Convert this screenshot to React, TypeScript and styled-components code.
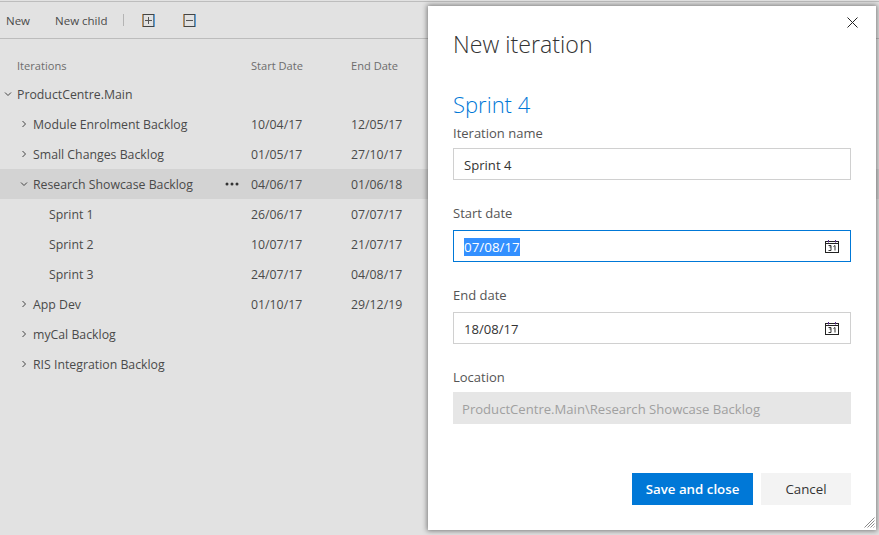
import * as React from 'react'
import styled, { createGlobalStyle } from 'styled-components'

const FONT = '"Open Sans", "Noto Sans", sans-serif'

interface Iteration {
  name: string
  level: number
  start?: string
  end?: string
  toggle?: 'open' | 'closed'
  active?: boolean
}

const ITERATIONS: Iteration[] = [
  { name: 'ProductCentre.Main', level: 0, toggle: 'open' },
  { name: 'Module Enrolment Backlog', level: 1, toggle: 'closed', start: '10/04/17', end: '12/05/17' },
  { name: 'Small Changes Backlog', level: 1, toggle: 'closed', start: '01/05/17', end: '27/10/17' },
  { name: 'Research Showcase Backlog', level: 1, toggle: 'open', start: '04/06/17', end: '01/06/18', active: true },
  { name: 'Sprint 1', level: 2, start: '26/06/17', end: '07/07/17' },
  { name: 'Sprint 2', level: 2, start: '10/07/17', end: '21/07/17' },
  { name: 'Sprint 3', level: 2, start: '24/07/17', end: '04/08/17' },
  { name: 'App Dev', level: 1, toggle: 'closed', start: '01/10/17', end: '29/12/19' },
  { name: 'myCal Backlog', level: 1, toggle: 'closed' },
  { name: 'RIS Integration Backlog', level: 1, toggle: 'closed' },
]

const Chevron = ({ type }: { type: 'open' | 'closed' }) => (
  <ToggleIcon width="8" height="8" viewBox="0 0 8 8">
    <path
      d={type === 'open' ? 'M1 2.5 L4 5.5 L7 2.5' : 'M2.5 1 L5.5 4 L2.5 7'}
      fill="none"
      stroke="#444"
      strokeWidth="1"
    />
  </ToggleIcon>
)

const BoxIcon = ({ plus }: { plus?: boolean }) => (
  <svg width="13" height="13" viewBox="0 0 13 13">
    <path d="M0 0.5 H13 M0 12.5 H13" stroke="#444" />
    <path d="M0.5 0 V13" stroke="#c08a4c" />
    <path d="M1.5 1 V12" stroke="#7c8894" />
    <path d="M11.5 1 V12" stroke="#6f7a84" />
    <path d="M12.5 0 V13" stroke="#4f9bdc" />
    <path d={plus ? 'M3 6.5 H10 M6.5 3 V10' : 'M3 6.5 H10'} fill="none" stroke="#555" />
  </svg>
)

const CalendarIcon = () => (
  <CalendarSvg width="14" height="14" viewBox="0 0 14 14">
    <rect x="0.5" y="2.5" width="13" height="11" fill="none" stroke="#222" />
    <path d="M0.5 4.5 H13.5" stroke="#222" />
    <path d="M3.5 1 V3.5 M10.5 1 V3.5" stroke="#5c2d91" />
    <path
      d="M3.5 6.5 H6 V8 H4.5 M6 8 V11.5 H3.5 M8.5 7.5 L10 6.5 V11.5"
      fill="none"
      stroke="#333"
    />
  </CalendarSvg>
)

const App = () => (
  <Page>
    <GlobalStyle />
    <Toolbar>
      <ToolButton>New</ToolButton>
      <ToolButton>New child</ToolButton>
      <Separator />
      <IconButton>
        <BoxIcon plus />
      </IconButton>
      <IconButton>
        <BoxIcon />
      </IconButton>
    </Toolbar>
    <HeaderRow>
      <NameCell level={0}>Iterations</NameCell>
      <DateCell>Start Date</DateCell>
      <DateCell>End Date</DateCell>
    </HeaderRow>
    {ITERATIONS.map(item => (
      <Row key={item.name} active={item.active}>
        <NameCell level={item.level}>
          {item.toggle && <Chevron type={item.toggle} />}
          <Name>{item.name}</Name>
          {item.active && (
            <MoreIcon width="14" height="4" viewBox="0 0 14 4">
              <circle cx="2" cy="2" r="1.5" fill="#333" />
              <circle cx="7" cy="2" r="1.5" fill="#333" />
              <circle cx="12" cy="2" r="1.5" fill="#333" />
            </MoreIcon>
          )}
        </NameCell>
        <DateCell>{item.start}</DateCell>
        <DateCell>{item.end}</DateCell>
      </Row>
    ))}
    <Dialog>
      <CloseIcon width="11" height="11" viewBox="0 0 11 11">
        <path d="M0.5 0.5 L10.5 10.5 M10.5 0.5 L0.5 10.5" stroke="#222" />
      </CloseIcon>
      <Title>New iteration</Title>
      <Subtitle>Sprint 4</Subtitle>
      <Label>Iteration name</Label>
      <Field>Sprint 4</Field>
      <Label wide>Start date</Label>
      <Field focused>
        <Selected>07/08/17</Selected>
        <CalendarIcon />
      </Field>
      <Label wide>End date</Label>
      <Field>
        18/08/17
        <CalendarIcon />
      </Field>
      <Label>Location</Label>
      <Field disabled>ProductCentre.Main\Research Showcase Backlog</Field>
      <Footer>
        <Button primary>Save and close</Button>
        <Button>Cancel</Button>
      </Footer>
      <Grip width="11" height="11" viewBox="0 0 11 11">
        <path d="M0.5 10.5 L10.5 0.5 M3.5 10.5 L10.5 3.5 M6.5 10.5 L10.5 6.5 M9.5 10.5 L10.5 9.5" stroke="#8a8a8a" />
      </Grip>
    </Dialog>
  </Page>
)

const GlobalStyle = createGlobalStyle`
  html, body {
    margin: 0;
    height: 100%;
    overflow: hidden;
    background: #e2e2e2;
  }
`

const Page = styled.div`
  position: relative;
  height: 535px;
  box-sizing: border-box;
  padding-top: 1px;
  font-family: ${FONT};
  font-size: 12.3px;
  color: #4a4a4a;
`

const Toolbar = styled.div`
  display: flex;
  align-items: center;
  height: 36px;
  padding-left: 6px;
  border-top: 1px solid #bdbdbd;
  border-bottom: 1px solid #bcbcbc;
`

const ToolButton = styled.span`
  margin-right: 25px;
  font-size: 11.5px;
`

const Separator = styled.span`
  width: 1px;
  height: 12px;
  margin-left: -9px;
  margin-right: 18px;
  background: #b4b4b4;
`

const IconButton = styled.span`
  display: flex;
  margin-right: 28px;
`

const HeaderRow = styled.div`
  display: flex;
  align-items: center;
  height: 28px;
  margin-top: 12px;
  color: #6d6d6d;
  font-size: 11.1px;
`

const Row = styled.div<{ active?: boolean }>`
  display: flex;
  align-items: center;
  height: 30px;
  background: ${props => (props.active ? '#d3d3d3' : 'transparent')};
`

const NameCell = styled.div<{ level: number }>`
  position: relative;
  display: flex;
  align-items: center;
  width: 251px;
  box-sizing: border-box;
  padding-left: ${props => 17 + props.level * 16}px;
`

const ToggleIcon = styled.svg`
  position: absolute;
  margin-left: -13px;
`

const Name = styled.span`
  flex: 1;
`

const MoreIcon = styled.svg`
  margin-right: 12px;
`

const DateCell = styled.div`
  width: 100px;
`

const Dialog = styled.div`
  position: absolute;
  top: 6px;
  left: 428px;
  width: 448px;
  height: 524px;
  box-sizing: border-box;
  padding: 0 25px;
  background: #fff;
  box-shadow: 0 0 5px 1px rgba(0, 0, 0, 0.45);
  color: #333;
`

const CloseIcon = styled.svg`
  position: absolute;
  top: 11px;
  right: 18px;
`

const Title = styled.div`
  margin-top: 20px;
  font-size: 23.2px;
  font-weight: 300;
  line-height: 36px;
  color: #333;
`

const Subtitle = styled.div`
  margin-top: 27px;
  font-size: 22px;
  font-weight: 300;
  line-height: 30px;
  color: #0078d7;
`

const Label = styled.div<{ wide?: boolean }>`
  margin-top: 24px;
  margin-bottom: ${props => (props.wide ? 8 : 6)}px;
  font-size: 13px;
  line-height: 18px;
  color: #555;

  ${Subtitle} + & {
    margin-top: 5px;
  }
`

const Field = styled.div<{ focused?: boolean; disabled?: boolean }>`
  display: flex;
  align-items: center;
  justify-content: space-between;
  height: 32px;
  box-sizing: border-box;
  padding: 1px 11px 0 ${props => (props.disabled ? 8 : 10)}px;
  font-size: 13.1px;
  border: 1px solid ${props => (props.focused ? '#0078d7' : props.disabled ? '#e6e6e6' : '#d0d0d0')};
  background: ${props => (props.disabled ? '#e6e6e6' : '#fff')};
  color: ${props => (props.disabled ? '#a0a0a0' : '#333')};
`

const Selected = styled.span`
  background: #3390ff;
  color: #fff;
  line-height: 18px;
  font-size: 13.4px;
`

const CalendarSvg = styled.svg`
  flex-shrink: 0;
  margin-top: -1px;
`

const Footer = styled.div`
  display: flex;
  justify-content: flex-end;
  gap: 8px;
  margin-top: 49px;
`

const Button = styled.div<{ primary?: boolean }>`
  display: flex;
  align-items: center;
  justify-content: center;
  width: ${props => (props.primary ? 121 : 90)}px;
  height: 32px;
  box-sizing: border-box;
  padding-bottom: 1px;
  font-size: 13.3px;
  font-weight: ${props => (props.primary ? 600 : 400)};
  background: ${props => (props.primary ? '#0078d7' : '#f3f3f3')};
  color: ${props => (props.primary ? '#fff' : '#333')};
`

const Grip = styled.svg`
  position: absolute;
  right: 1px;
  bottom: 2px;
`

export default App
